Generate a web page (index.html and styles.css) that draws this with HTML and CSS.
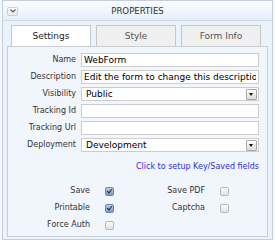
FILE: index.html
```html
<!DOCTYPE html>
<html lang="en">
<head>
  <meta charset="UTF-8">
  <meta name="viewport" content="width=device-width, initial-scale=1.0">
  <title>Properties</title>
  <link rel="stylesheet" href="styles.css">
</head>
<body>
  <div class="widget">
    <div class="widget-header">
      <span class="toggle">
        <svg width="6" height="4" viewBox="0 0 6 4"><path d="M0.5 0.5 L3 3 L5.5 0.5" fill="none" stroke="#555" stroke-width="1.1"/></svg>
      </span>
      <span class="title">PROPERTIES</span>
    </div>

    <div class="tabs">
      <div class="tab active">Settings</div>
      <div class="tab">Style</div>
      <div class="tab">Form Info</div>
    </div>

    <div class="panel">
      <div class="form">
        <label>Name</label>
        <input type="text" value="WebForm">

        <label>Description</label>
        <input type="text" value="Edit the form to change this description">

        <label>Visibility</label>
        <div class="select"><span>Public</span><span class="select-btn"></span></div>

        <label>Tracking Id</label>
        <input type="text" value="">

        <label>Tracking Url</label>
        <input type="text" value="">

        <label>Deployment</label>
        <div class="select"><span>Development</span><span class="select-btn"></span></div>
      </div>

      <div class="link-row"><a href="#">Click to setup Key/Saved fields</a></div>

      <!-- checkboxes, two columns -->
      <div class="checks">
        <span class="check-label">Save</span><span class="box checked"></span>
        <span class="check-label">Save PDF</span><span class="box"></span>

        <span class="check-label">Printable</span><span class="box checked"></span>
        <span class="check-label">Captcha</span><span class="box"></span>

        <span class="check-label">Force Auth</span><span class="box"></span>
      </div>
    </div>
  </div>
</body>
</html>
```

FILE: styles.css
```css
html, body {
  margin: 0;
  padding: 0;
}

body {
  font-family: "DejaVu Sans", Verdana, sans-serif;
  background: #f4f8fc;
  padding: 0 2px;
}

.widget {
  box-sizing: border-box;
  height: 240px;
  border: 1px solid #c3cfdd;
  background: #eaf2fb;
  display: flex;
  flex-direction: column;
}

.widget-header {
  height: 19px;
  border-bottom: 1px solid #cfdae6;
  background: linear-gradient(#fbfdff, #e5eff9);
  display: grid;
  grid-template-columns: 1fr auto 1fr;
  align-items: center;
}

.toggle {
  box-sizing: border-box;
  width: 11px;
  height: 9px;
  margin-left: 4px;
  margin-top: 1px;
  border: 1px solid #c9d1db;
  border-radius: 2px;
  background: linear-gradient(#ffffff, #e6e9ee);
  display: flex;
  align-items: center;
  justify-content: center;
}

.title {
  font-size: 8.6px;
  color: #333;
}

.tabs {
  display: flex;
  gap: 5px;
  margin-top: 4px;
  padding-left: 8px;
}

.tab {
  width: 78px;
  height: 20px;
  border: 1px solid #c7c7c7;
  border-bottom: none;
  background: #efefef;
  color: #555;
  font-size: 9px;
  line-height: 20px;
  text-align: center;
}

.tab.active {
  background: #fff;
  color: #222;
}

.panel {
  flex: 1;
  margin: 0 4px 2px 4px;
  border: 1px solid #c9ced4;
  background: #f1f6fc;
  padding-top: 6px;
}

.form {
  display: grid;
  grid-template-columns: 68px 1fr;
  column-gap: 5px;
  row-gap: 3px;
  padding-right: 8px;
}

.form label {
  font-size: 8px;
  color: #333;
  text-align: right;
  line-height: 14px;
  white-space: nowrap;
}

.form input,
.select {
  box-sizing: border-box;
  width: 100%;
  height: 14px;
  margin: 0;
  border: 1px solid #cccccc;
  background: #fff;
  font-family: "DejaVu Sans", Verdana, sans-serif;
  font-size: 9px;
  color: #000;
  padding: 0 2px;
  outline: none;
}

.select {
  display: flex;
  align-items: center;
  justify-content: space-between;
  padding: 0 1px 0 4px;
}

.select-btn {
  box-sizing: border-box;
  width: 11px;
  height: 11px;
  border: 1px solid #a9a9a9;
  border-radius: 1px;
  background: linear-gradient(#fdfdfd, #dcdcdc);
  position: relative;
}

.select-btn::after {
  content: "";
  position: absolute;
  left: 2px;
  top: 3px;
  border-left: 2.5px solid transparent;
  border-right: 2.5px solid transparent;
  border-top: 3px solid #111;
}

.link-row {
  margin-top: 9px;
  padding-right: 8px;
  text-align: right;
  font-size: 8px;
  line-height: 12px;
}

.link-row a {
  color: #3030cc;
  text-decoration: none;
}

.checks {
  display: grid;
  grid-template-columns: 97px 9px 106px 9px;
  row-gap: 5px;
  align-items: center;
  margin-top: 12px;
}

.check-label {
  font-size: 8px;
  color: #333;
  text-align: right;
  padding-right: 15px;
  line-height: 12px;
  white-space: nowrap;
}

.box {
  box-sizing: border-box;
  width: 9px;
  height: 9px;
  border: 1px solid #b8b8b8;
  border-radius: 2px;
  background: linear-gradient(#fdfdfd, #e0e0e0);
  position: relative;
}

.box.checked {
  border-color: #7186a8;
  background: linear-gradient(#b9c9e4, #7e98c4);
}

.box.checked::after {
  content: "";
  position: absolute;
  left: 2px;
  top: 0;
  width: 2px;
  height: 4px;
  border-right: 1.5px solid #1d2c52;
  border-bottom: 1.5px solid #1d2c52;
  transform: rotate(40deg);
}
```
